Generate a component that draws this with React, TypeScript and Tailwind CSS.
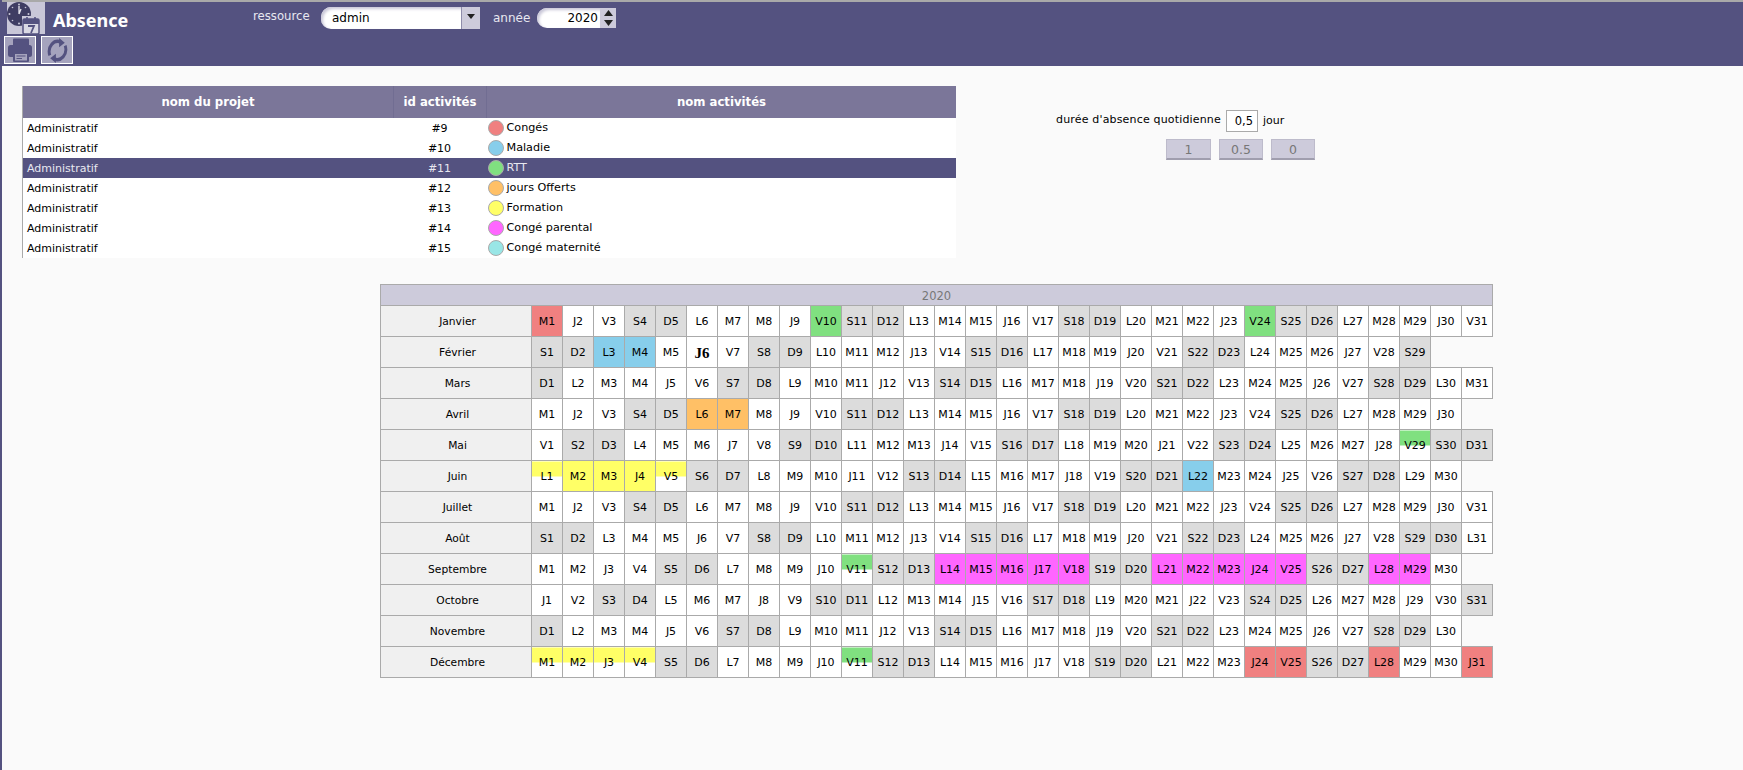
import { useMemo } from 'react';

const months = ['Janvier', 'Février', 'Mars', 'Avril', 'Mai', 'Juin', 'Juillet', 'Août', 'Septembre', 'Octobre', 'Novembre', 'Décembre'];
const letters = ['D', 'L', 'M', 'M', 'J', 'V', 'S'];

const activities = [
  { id: 9, name: 'Congés', dot: 'bg-[#f08080]' },
  { id: 10, name: 'Maladie', dot: 'bg-[#87ceeb]' },
  { id: 11, name: 'RTT', dot: 'bg-[#80e080]', selected: true },
  { id: 12, name: 'jours Offerts', dot: 'bg-[#ffc066]' },
  { id: 13, name: 'Formation', dot: 'bg-[#ffff66]' },
  { id: 14, name: 'Congé parental', dot: 'bg-[#ff66ff]' },
  { id: 15, name: 'Congé maternité', dot: 'bg-[#99e6e6]' },
];

const RED = 'bg-[#f08080]';
const BLUE = 'bg-[#87ceeb]';
const GREEN = 'bg-[#80e080]';
const ORANGE = 'bg-[#ffc066]';
const YELLOW = 'bg-[#ffff66]';
const PINK = 'bg-[#ff66ff]';
const HALF_GREEN = 'bg-[linear-gradient(#80e080_15px,#ffffff_15px)]';
const HALF_YELLOW = 'bg-[linear-gradient(#ffff66_15px,#ffffff_15px)]';

// month index -> day -> colour
const absences: Record<number, Record<number, string>> = {
  0: { 1: RED, 10: GREEN, 24: GREEN },
  1: { 3: BLUE, 4: BLUE },
  3: { 6: ORANGE, 7: ORANGE },
  4: { 29: HALF_GREEN },
  5: { 1: HALF_YELLOW, 2: YELLOW, 3: YELLOW, 4: YELLOW, 5: HALF_YELLOW, 22: BLUE },
  8: { 11: HALF_GREEN, 14: PINK, 15: PINK, 16: PINK, 17: PINK, 18: PINK, 21: PINK, 22: PINK, 23: PINK, 24: PINK, 25: PINK, 28: PINK, 29: PINK },
  11: { 1: HALF_YELLOW, 2: HALF_YELLOW, 3: HALF_YELLOW, 4: HALF_YELLOW, 11: HALF_GREEN, 24: RED, 25: RED, 28: RED, 31: RED },
};

function MonthRow({ month }: { month: number }) {
  const count = new Date(2020, month + 1, 0).getDate();
  const days = Array.from({ length: count }, (_, i) => i + 1);

  return (
    <tr className="h-[31px]">
      <td className="w-[151px] border border-[#aaaaaa] bg-[#f0f0f0] pt-[2px] pl-[3px] text-center text-[10.7px]">{months[month]}</td>
      {days.map((day) => {
        const weekday = new Date(2020, month, day).getDay();
        const weekend = weekday === 0 || weekday === 6;
        const color = absences[month]?.[day] ?? (weekend ? 'bg-[#dcdcdc]' : 'bg-white');
        const today = month === 1 && day === 6;
        return (
          <td key={day} className={`w-[31px] border border-[#aaaaaa] p-0 pt-[2px] text-center ${color}`}>
            {today ? (
              <span className="font-['Liberation_Serif',serif] text-[15px] font-bold">{letters[weekday] + day}</span>
            ) : (
              letters[weekday] + day
            )}
          </td>
        );
      })}
    </tr>
  );
}

function ClockLogo() {
  return (
    <svg width="38" height="32" viewBox="0 0 38 32">
      <circle cx="12" cy="12" r="12" fill="#3f3d63" />
      <g fill="#c9c7d8">
        <circle cx="12" cy="2.5" r="1" />
        <circle cx="12" cy="21.5" r="1" />
        <circle cx="2.5" cy="12" r="1" />
        <circle cx="21.5" cy="12" r="1" />
        <circle cx="5.5" cy="5.5" r="0.8" />
        <circle cx="18.5" cy="5.5" r="0.8" />
        <circle cx="5.5" cy="18.5" r="0.8" />
      </g>
      <path d="M12 12V4M12 12l2-5" stroke="#e6e5ee" strokeWidth="1.3" fill="none" />
      <rect x="15" y="14" width="19" height="18" fill="#c9c7d8" />
      <rect x="16" y="17" width="16" height="15" rx="1.5" fill="#d9d8e4" stroke="#545280" strokeWidth="1.5" />
      <rect x="16" y="17" width="16" height="5" fill="#545280" />
      <path d="M20 15v4M28 15v4" stroke="#545280" strokeWidth="1.6" />
      <path d="M21 24h6l-3 7" stroke="#545280" strokeWidth="1.8" fill="none" />
    </svg>
  );
}

function PrinterIcon() {
  return (
    <svg width="30" height="26" viewBox="0 0 30 26">
      <rect x="8" y="1.5" width="16" height="8" rx="1" fill="#545280" />
      <rect x="3" y="8" width="24" height="12" rx="2.5" fill="#545280" />
      <rect x="8" y="15" width="16" height="10" rx="1" fill="#545280" />
      <rect x="10" y="17" width="12" height="6.5" fill="#a5a3bd" />
      <path d="M11.5 19h9M11.5 21.5h5.5" stroke="#545280" strokeWidth="1.2" />
    </svg>
  );
}

function RefreshIcon() {
  return (
    <svg width="21" height="25" viewBox="0 0 26 26" fill="none" preserveAspectRatio="none">
      <path d="M3.5 18a10.5 10.5 0 0 1 14-13.5" stroke="#545280" strokeWidth="3.6" />
      <path d="M22.5 8a10.5 10.5 0 0 1-14 13.5" stroke="#545280" strokeWidth="3.6" />
      <path d="M15 0l7 5-7 4.5zM11 26l-7-5 7-4.5z" fill="#545280" />
    </svg>
  );
}

export default function App() {
  const rows = useMemo(() => months.map((_, i) => i), []);

  return (
    <div className="h-[770px] overflow-hidden border-l-2 border-[#545280] bg-[#fafafa] font-['DejaVu_Sans',sans-serif] text-[11px] text-black">
      <header className="relative h-[66px] border-t-2 border-[#a9a9a9] bg-[#545280]">
        <div className="flex h-[32px] items-start">
          <div className="ml-[5px] h-[32px] w-[38px] bg-[#c9c7d8]">
            <ClockLogo />
          </div>
          <h1 className="ml-[8px] w-[200px] pt-[2px] font-['Noto_Sans',sans-serif] text-[18px] leading-[32px] font-bold text-white">Absence</h1>
          <div className="flex h-[32px] items-center">
            <span className="w-[68px] pb-[3px] text-[11.7px] text-[#e8e8f0]">ressource</span>
            <div className="flex h-[22px] w-[159px] overflow-hidden rounded-l-[10px] bg-white pl-[11px] text-[12px] leading-[22px] shadow-[inset_2px_2px_3px_#c9c7d8]">
              <span className="flex-1">admin</span>
              <span className="flex w-[19px] items-center justify-center border-l border-[#8f8dab] bg-[#cdcbdb] pb-[3px]">
                <svg width="8" height="5" viewBox="0 0 8 5"><path d="M0 0h8L4 5z" fill="#222222" /></svg>
              </span>
            </div>
            <span className="ml-[13px] w-[44px] text-[12px] text-[#e8e8f0]">année</span>
            <div className="h-[20px] w-[63px] rounded-l-[10px] bg-white pr-[2px] text-right text-[12px] leading-[20px] shadow-[inset_2px_2px_3px_#c9c7d8]">2020</div>
            <div className="flex h-[20px] w-[16px] flex-col items-center justify-between bg-[#cdcbdb] py-[2px]">
              <svg width="9" height="6" viewBox="0 0 9 6"><path d="M0 6h9L4.5 0z" fill="#222222" /></svg>
              <svg width="9" height="6" viewBox="0 0 9 6"><path d="M0 0h9L4.5 6z" fill="#222222" /></svg>
            </div>
          </div>
        </div>
        <div className="mt-[2px] ml-[2px] flex gap-[5px]">
          <button className="flex h-[28px] w-[32px] items-center justify-center border border-white bg-[#a5a3bd]">
            <PrinterIcon />
          </button>
          <button className="flex h-[28px] w-[32px] items-center justify-center border border-white bg-[#a5a3bd]">
            <RefreshIcon />
          </button>
        </div>
      </header>

      <div className="mt-[20px] flex items-start">
        <table className="ml-[20px] w-[934px] table-fixed border-collapse border-l border-[#aaaaaa] bg-white">
          <thead>
            <tr className="h-[32px] bg-[#7b7699] text-[11.7px] font-bold text-white">
              <th className="w-[371px] border-r border-[#716d92] pt-[2px]">nom du projet</th>
              <th className="w-[93px] border-r border-[#716d92] pt-[2px]">id activités</th>
              <th className="pt-[2px]">nom activités</th>
            </tr>
          </thead>
          <tbody>
            {activities.map((a) => (
              <tr key={a.id} className={`h-[20px] ${a.selected ? 'bg-[#545280] text-[#e8e8f0]' : ''}`}>
                <td className="pt-[2px] pl-[4px]">Administratif</td>
                <td className="pt-[2px] pr-[1px] text-center">#{a.id}</td>
                <td className="pl-[1px]">
                  <div className="flex items-center gap-[3px]">
                    <span className={`h-[16px] w-[16px] rounded-full border border-[#aaaaaa] ${a.dot}`} />
                    <span className="text-[11.2px]">{a.name}</span>
                  </div>
                </td>
              </tr>
            ))}
          </tbody>
        </table>

        <div className="ml-[100px] flex flex-col">
          <div className="mt-[24px] flex items-center">
            <span className="pb-[2px] tracking-[0.17px]">durée d'absence quotidienne</span>
            <span className="ml-[5px] h-[22px] w-[32px] border border-[#aaaaaa] bg-white pr-[4px] text-right text-[11.5px] leading-[20px]">0,5</span>
            <span className="ml-[5px]">jour</span>
          </div>
          <div className="mt-[7px] ml-[110px] flex gap-[8px] text-[12.5px] text-[#777777]">
            <button className="h-[21px] w-[45px] border border-b-2 border-[#bdbbcb] border-b-[#a09eae] bg-[#cdcbdb] pt-[1px]">1</button>
            <button className="h-[21px] w-[44px] border border-b-2 border-[#bdbbcb] border-b-[#a09eae] bg-[#cdcbdb] pt-[1px]">0.5</button>
            <button className="h-[21px] w-[44px] border border-b-2 border-[#bdbbcb] border-b-[#a09eae] bg-[#cdcbdb] pt-[1px]">0</button>
          </div>
        </div>
      </div>

      <table className="mt-[26px] ml-[378px] table-fixed border-collapse">
        <thead>
          <tr className="h-[21px]">
            <th colSpan={32} className="border border-[#aaaaaa] bg-[#cdcbdb] pt-[3px] text-[11.5px] font-normal text-[#777777]">2020</th>
          </tr>
        </thead>
        <tbody>
          {rows.map((m) => (
            <MonthRow key={m} month={m} />
          ))}
        </tbody>
      </table>
    </div>
  );
}
